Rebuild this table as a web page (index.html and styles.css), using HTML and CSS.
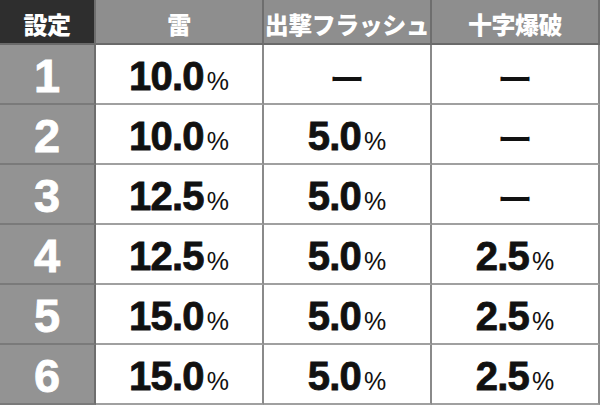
FILE: index.html
```html
<!DOCTYPE html>
<html lang="ja">
<head>
<meta charset="utf-8">
<link rel="stylesheet" href="styles.css">
</head>
<body>
<div class="table">
  <div class="cell head head-dark">設定</div>
  <div class="cell head">雷</div>
  <div class="cell head">出撃フラッシュ</div>
  <div class="cell head">十字爆破</div>

  <div class="cell set">1</div>
  <div class="cell val">10.0<span class="pct">%</span></div>
  <div class="cell val"><span class="dash">ー</span></div>
  <div class="cell val"><span class="dash">ー</span></div>

  <div class="cell set">2</div>
  <div class="cell val">10.0<span class="pct">%</span></div>
  <div class="cell val">5.0<span class="pct">%</span></div>
  <div class="cell val"><span class="dash">ー</span></div>

  <div class="cell set">3</div>
  <div class="cell val">12.5<span class="pct">%</span></div>
  <div class="cell val">5.0<span class="pct">%</span></div>
  <div class="cell val"><span class="dash">ー</span></div>

  <div class="cell set">4</div>
  <div class="cell val">12.5<span class="pct">%</span></div>
  <div class="cell val">5.0<span class="pct">%</span></div>
  <div class="cell val">2.5<span class="pct">%</span></div>

  <div class="cell set">5</div>
  <div class="cell val">15.0<span class="pct">%</span></div>
  <div class="cell val">5.0<span class="pct">%</span></div>
  <div class="cell val">2.5<span class="pct">%</span></div>

  <div class="cell set">6</div>
  <div class="cell val">15.0<span class="pct">%</span></div>
  <div class="cell val">5.0<span class="pct">%</span></div>
  <div class="cell val">2.5<span class="pct">%</span></div>
</div>
</body>
</html>
```

FILE: styles.css
```css
html, body {
  margin: 0;
  padding: 0;
  background: #ffffff;
}

.table {
  display: grid;
  grid-template-columns: 96px 168px 168px 168px;
  grid-template-rows: 45px repeat(6, 60px);
  width: 600px;
}

.cell {
  box-sizing: border-box;
  display: flex;
  align-items: center;
  justify-content: center;
  border-right: 2px solid #8a8a8a;
  border-bottom: 2px solid #a0a0a0;
}

.head {
  background: #8e8e8e;
  color: #ffffff;
  font-family: "Noto Sans CJK JP", sans-serif;
  font-weight: 900;
  font-size: 24px;
  letter-spacing: -0.5px;
  border-bottom-color: #6a6a6a;
  border-right-color: #6e6e6e;
  padding-top: 3px;
}

.head-dark {
  background: #2e2e2e;
}

.set {
  background: #939393;
  color: #ffffff;
  font-family: "Liberation Sans", Arial, sans-serif;
  font-weight: 700;
  font-size: 47px;
  -webkit-text-stroke: 0.8px #ffffff;
  border-right-color: #6e6e6e;
  border-bottom-color: #7a7a7a;
  padding-top: 2px;
}

.val {
  background: #ffffff;
  color: #111111;
  font-family: "Liberation Sans", Arial, sans-serif;
  font-weight: 700;
  font-size: 40px;
  letter-spacing: -0.8px;
  -webkit-text-stroke: 0.8px #111111;
  align-items: baseline;
  padding-top: 9px;
}

.pct {
  font-weight: 400;
  font-size: 25px;
  letter-spacing: 0;
  -webkit-text-stroke: 0;
  margin-left: 3px;
}

.dash {
  font-family: "Noto Sans CJK JP", sans-serif;
  font-weight: 500;
  font-size: 36px;
  letter-spacing: 0;
  -webkit-text-stroke: 0;
  line-height: 1;
  margin-top: 5px;
}
```
